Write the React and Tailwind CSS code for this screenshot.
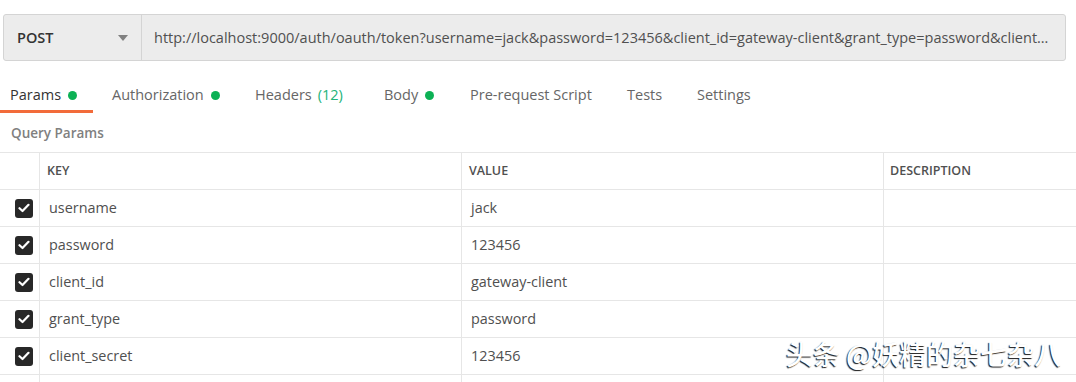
import React from "react";

const URL =
  "http://localhost:9000/auth/oauth/token?username=jack&password=123456&client_id=gateway-client&grant_type=password&client_secret=123456";

const tabs = [
  { label: "Params", w: "w-[102px]", dot: true, active: true },
  { label: "Authorization", w: "w-[143px]", dot: true },
  { label: "Headers", w: "w-[129px]", count: "(12)" },
  { label: "Body", w: "w-[86px]", dot: true },
  { label: "Pre-request Script", w: "w-[157px]" },
  { label: "Tests", w: "w-[70px]" },
  { label: "Settings", w: "w-[90px]" },
];

const params = [
  { key: "username", value: "jack" },
  { key: "password", value: "123456" },
  { key: "client_id", value: "gateway-client" },
  { key: "grant_type", value: "password" },
  { key: "client_secret", value: "123456" },
];

function Check() {
  return (
    <div className="w-[18px] h-[19px] rounded-[3px] bg-[#282828] flex items-center justify-center">
      <svg width="12" height="10" viewBox="0 0 12 10" fill="none">
        <path d="M1.5 5.2 L4.5 8 L10.5 1.8" stroke="#fff" strokeWidth="2.2" strokeLinecap="round" strokeLinejoin="round" />
      </svg>
    </div>
  );
}

export default function App() {
  return (
    <div className="relative w-[1076px] h-[382px] overflow-hidden bg-white font-['Open_Sans',sans-serif]">
      {/* request bar */}
      <div className="pt-[14px] pl-[3px] pr-[10px]">
        <div className="flex h-[47px] rounded-[3px] border border-[#d4d4d4] bg-[#ececec]">
          <div className="w-[138px] flex items-center justify-between pl-[13px] pr-[13px] border-r border-[#d4d4d4]">
            <span className="text-[14.5px] font-semibold text-[#333]">POST</span>
            <svg width="10" height="6" viewBox="0 0 10 6">
              <path d="M0 0 L10 0 L5 6 Z" fill="#808080" />
            </svg>
          </div>
          <div className="flex-1 min-w-0 flex items-center pl-[12px] pr-[11px]">
            <span className="truncate text-[14.5px] text-[#505050]">{URL}</span>
          </div>
        </div>
      </div>

      {/* tabs */}
      <div className="flex mt-[17px]">
        {tabs.map((t) => (
          <div key={t.label} className={`${t.w} flex flex-col`}>
            <div className="h-[32px] flex items-center pl-[10px] pt-[2px] text-[14.5px] whitespace-nowrap">
              <span className={t.active ? "text-[#333]" : "text-[#666]"}>{t.label}</span>
              {t.dot && <span className="ml-[7px] w-[9px] h-[9px] rounded-full bg-[#0cb155]" />}
              {t.count && <span className="ml-[6px] text-[#22b37a]">{t.count}</span>}
            </div>
            <div className={t.active ? "h-[3px] w-[93px] bg-[#f26b3a]" : "h-[3px]"} />
          </div>
        ))}
      </div>

      <div className="h-[39px] flex items-center pl-[11px] pt-[2px] text-[13.5px] font-semibold text-[#808080]">
        Query Params
      </div>

      {/* table */}
      <div className="flex flex-col text-[14.4px] text-[#505050]">
        <div className="grid grid-cols-[39px_422px_422px_1fr] h-[37px] border-t border-[#e6e6e6]">
          <div />
          <div className="border-l border-[#e6e6e6] flex items-center pl-[7px] pt-[1px] text-[12.5px] font-semibold">KEY</div>
          <div className="border-l border-[#e6e6e6] flex items-center pl-[7px] pt-[1px] text-[12.5px] font-semibold">VALUE</div>
          <div className="border-l border-[#e6e6e6] flex items-center pl-[6px] pt-[1px] text-[12.5px] font-semibold">DESCRIPTION</div>
        </div>
        {params.map((p) => (
          <div key={p.key} className="grid grid-cols-[39px_422px_422px_1fr] h-[37px] border-t border-[#e6e6e6]">
            <div className="flex items-center pl-[15px]">
              <Check />
            </div>
            <div className="border-l border-[#e6e6e6] flex items-center pl-[9px]">{p.key}</div>
            <div className="border-l border-[#e6e6e6] flex items-center pl-[9px]">{p.value}</div>
            <div className="border-l border-[#e6e6e6]" />
          </div>
        ))}
        <div className="grid grid-cols-[39px_422px_422px_1fr] h-[37px] border-t border-[#e6e6e6]">
          <div />
          <div className="border-l border-[#e6e6e6]" />
          <div className="border-l border-[#e6e6e6]" />
          <div className="border-l border-[#e6e6e6]" />
        </div>
      </div>

      {/* watermark */}
      <div className="absolute left-[786px] top-[337px] text-[27px] leading-[34px] font-medium text-white whitespace-nowrap font-['Noto_Sans_CJK_SC',sans-serif] [text-shadow:-1px_1px_1px_rgba(0,0,0,0.9)]">
        头条 @妖精的杂七杂八
      </div>
    </div>
  );
}
